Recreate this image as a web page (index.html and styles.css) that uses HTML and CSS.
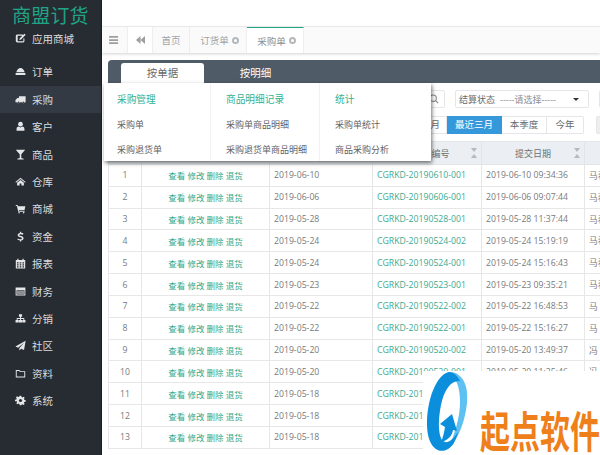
FILE: index.html
```html
<!DOCTYPE html>
<html lang="zh">
<head>
<meta charset="utf-8">
<title>采购单</title>
<link rel="stylesheet" href="styles.css">
</head>
<body>
<div class="app">
  <aside class="side">
    <div class="brand">商盟订货</div>
    <a class="item first"><svg class="ic" viewBox="0 0 14 14"><path d="M2.500 2h7.500v1.400H3.400v7.200h7.200V7h1.400v3.500a2 2 0 0 1-2 1.500H3a2 2 0 0 1-2-1.700V3.700A2 2 0 0 1 2.500 2zM12 .8l1.600 1.500-5.800 5.900L5.400 9l.7-2.400z"/></svg>应用商城</a>
    <a class="item gap"><svg class="ic" viewBox="0 0 14 14"><path d="M7 2.500c2.500 0 4.500 2 5.300 5.500H1.700C2.500 4.500 4.500 2.500 7 2.500zM.8 9h12.400v2.500H.8z"/></svg>订单</a>
    <a class="item active"><svg class="ic" viewBox="0 0 14 14"><path d="M5 3h8.500v7.500h-1.300a1.700 1.700 0 0 1-3.300 0H6.100a1.700 1.700 0 0 1-3.300 0H.6V7.500L3 5h2z"/><circle cx="4.500" cy="10.700" r="1" fill="#333a44"/><circle cx="10.500" cy="10.700" r="1" fill="#333a44"/></svg>采购</a>
    <a class="item"><svg class="ic" viewBox="0 0 14 14"><circle cx="7" cy="4" r="3"/><path d="M2 12.500V10c0-2 1.500-3 3-3l2 1.200L9 7c1.500 0 3 1 3 3v2.500z"/></svg>客户</a>
    <a class="item"><svg class="ic" viewBox="0 0 14 14"><path d="M1 1h12L8 6.800V11.300l3 1.200v.8H3v-.8l3-1.200V6.800z"/></svg>商品</a>
    <a class="item"><svg class="ic" viewBox="0 0 14 14"><path d="M7 2.200l6.500 5.500-.8.800L7 3.800 1.300 8.500l-.8-.8zM2.700 8.600L7 5l4.300 3.600v3.400H8.200V9.400H5.800V12H2.700z"/></svg>仓库</a>
    <a class="item"><svg class="ic" viewBox="0 0 14 14"><path d="M1 2.500h2.300l.4 1.500h9.500l-1 5H5l.2 1h7v1.200H4.200L2.400 3.700H1z"/><circle cx="5.200" cy="12.300" r="1"/><circle cx="11" cy="12.300" r="1"/></svg>商城</a>
    <a class="item"><svg class="ic" viewBox="0 0 14 14"><path d="M6.300 1h1.500v1.300c1.300.1 2.300.5 3 1l-.8 1.500c-.8-.5-1.700-.8-2.800-.8-1 0-1.700.4-1.700 1 0 .7.8 1 2.100 1.300 2 .5 3.300 1.200 3.300 3 0 1.600-1.200 2.600-3.100 2.800V13.500H6.300v-1.400c-1.400-.1-2.600-.6-3.400-1.200l.9-1.500c.9.700 2 1.100 3.100 1.100 1.100 0 1.900-.4 1.900-1.100 0-.7-.8-1-2.200-1.300-1.900-.5-3.200-1.200-3.200-2.900 0-1.500 1.200-2.500 2.900-2.700z"/></svg>资金</a>
    <a class="item"><svg class="ic" viewBox="0 0 14 14"><path d="M3 .8h1.500v1.700h5V.8H11v1.700h2v11H1v-11h2zM2.500 5.500v1.500h2V5.500zm3.500 0v1.500h2V5.500zm3.500 0v1.500h2V5.500zM2.500 8v1.500h2V8zM6 8v1.500h2V8zm3.500 0v1.500h2V8zM2.500 10.500V12h2v-1.500zm3.500 0V12h2v-1.500zm3.500 0V12h2v-1.500z"/></svg>报表</a>
    <a class="item"><svg class="ic" viewBox="0 0 14 14"><path d="M.8 2h12.400v10H.8zm1.200 3.500V10.800h10V5.500z"/><path class="dim" d="M2.500 6h9v4.300h-9z"/></svg>财务</a>
    <a class="item"><svg class="ic" viewBox="0 0 14 14"><path d="M5 1.500h4v3.300H7.600v1.600h4.200v2.500h1.500v3.300H9.300V8.900h1.400V7.500H7.600v1.400H9v3.300H5V8.900h1.400V7.500H3.300v1.400h1.400v3.300H.7V8.900h1.500V6.400h4.200V4.800H5z"/></svg>分销</a>
    <a class="item"><svg class="ic" viewBox="0 0 14 14"><path d="M13.500.8L11.500 12.700 7.800 11 5.500 13.500V10.500L11.500 3.500 4 9.800.5 8.300z"/></svg>社区</a>
    <a class="item"><svg class="ic" viewBox="0 0 14 14"><path d="M1 2.500h4.500L7 4h6v8H1zm1.200 1.200v7.100h9.600V5.200H6.500L5 3.700z"/></svg>资料</a>
    <a class="item"><svg class="ic" viewBox="0 0 14 14"><path d="M6 1h2l.3 1.700 1.100.5 1.500-1 1.400 1.400-1 1.500.5 1.100 1.700.3v2l-1.700.3-.5 1.100 1 1.500-1.400 1.400-1.500-1-1.100.5L8 13H6l-.3-1.700-1.100-.5-1.500 1-1.400-1.400 1-1.500-.5-1.100L0 8V6l1.700-.3.5-1.100-1-1.500 1.400-1.400 1.500 1 1.100-.5z"/><circle cx="7" cy="7" r="2" fill="#272c33"/></svg>系统</a>
  </aside>

  <main class="main">
    <header class="top"></header>
    <nav class="tabbar">
      <span class="cell toggle"><svg class="tool" viewBox="0 0 12 10"><path d="M0 0h10v2H0zM0 3.500h10v2H0zM0 7h10v2H0z"/></svg></span>
      <span class="cell back"><svg class="tool" viewBox="0 0 12 10"><path d="M6 0v9L1 4.500zM11 0v9L6 4.500z"/></svg></span>
      <span class="cell tab home">首页</span>
      <span class="cell tab order">订货单<i class="close"></i></span>
      <span class="cell tab current">采购单<i class="close"></i></span>
    </nav>

    <section class="panel">
      <div class="panelbar">
        <span class="ptab on">按单据</span>
        <span class="ptab">按明细</span>
      </div>
      <div class="filters">
        <div class="frow one">
          <span class="search"><svg class="mag" viewBox="0 0 12 12"><circle cx="5" cy="5" r="3.800"/><path d="M8 8l3 3"/></svg></span>
          <span class="select"><span>结算状态</span><span class="ph">-----请选择-----</span><i class="caret"></i></span>
          <span class="stub"></span>
        </div>
        <div class="frow two">
          <span class="btns"><b class="b month">本月</b><b class="b cur">最近三月</b><b class="b quarter">本季度</b><b class="b year">今年</b></span>
          <span class="stub light"></span>
        </div>
      </div>
      <div class="tablewrap">
        <table class="grid">
          <colgroup><col class="c1"><col class="c2"><col class="c3"><col class="c4"><col class="c5"><col class="c6"></colgroup>
          <thead><tr><th>#</th><th>操作</th><th>单据日期</th><th class="sort">采购单编号<i class="arrows"></i></th><th class="sort">提交日期<i class="arrows"></i></th><th>制单人</th></tr></thead>
          <tbody>
            <tr><td>1</td><td class="acts">查看 修改 删除 退货</td><td>2019-06-10</td><td class="no">CGRKD-20190610-001</td><td>2019-06-10 09:34:36</td><td class="who">马春</td></tr>
            <tr><td>2</td><td class="acts">查看 修改 删除 退货</td><td>2019-06-06</td><td class="no">CGRKD-20190606-001</td><td>2019-06-06 09:07:44</td><td class="who">马春</td></tr>
            <tr><td>3</td><td class="acts">查看 修改 删除 退货</td><td>2019-05-28</td><td class="no">CGRKD-20190528-001</td><td>2019-05-28 11:37:44</td><td class="who">马春</td></tr>
            <tr><td>4</td><td class="acts">查看 修改 删除 退货</td><td>2019-05-24</td><td class="no">CGRKD-20190524-002</td><td>2019-05-24 15:19:19</td><td class="who">马春</td></tr>
            <tr><td>5</td><td class="acts">查看 修改 删除 退货</td><td>2019-05-24</td><td class="no">CGRKD-20190524-001</td><td>2019-05-24 15:16:43</td><td class="who">马春</td></tr>
            <tr><td>6</td><td class="acts">查看 修改 删除 退货</td><td>2019-05-23</td><td class="no">CGRKD-20190523-001</td><td>2019-05-23 09:35:21</td><td class="who">马春</td></tr>
            <tr><td>7</td><td class="acts">查看 修改 删除 退货</td><td>2019-05-22</td><td class="no">CGRKD-20190522-002</td><td>2019-05-22 16:48:53</td><td class="who">马</td></tr>
            <tr><td>8</td><td class="acts">查看 修改 删除 退货</td><td>2019-05-22</td><td class="no">CGRKD-20190522-001</td><td>2019-05-22 15:16:27</td><td class="who">马</td></tr>
            <tr><td>9</td><td class="acts">查看 修改 删除 退货</td><td>2019-05-20</td><td class="no">CGRKD-20190520-002</td><td>2019-05-20 13:49:37</td><td class="who">冯</td></tr>
            <tr><td>10</td><td class="acts">查看 修改 删除 退货</td><td>2019-05-20</td><td class="no">CGRKD-20190520-001</td><td>2019-05-20 11:35:46</td><td class="who">冯</td></tr>
            <tr><td>11</td><td class="acts">查看 修改 删除 退货</td><td>2019-05-18</td><td class="no">CGRKD-20190518-003</td><td></td><td></td></tr>
            <tr><td>12</td><td class="acts">查看 修改 删除 退货</td><td>2019-05-18</td><td class="no">CGRKD-20190518-002</td><td></td><td></td></tr>
            <tr><td>13</td><td class="acts">查看 修改 删除 退货</td><td>2019-05-18</td><td class="no">CGRKD-20190518-001</td><td></td><td></td></tr>
          </tbody>
        </table>
      </div>

      <div class="menu">
        <ul class="mcol mc1"><li class="mh">采购管理</li><li>采购单</li><li>采购退货单</li></ul>
        <ul class="mcol mc2"><li class="mh">商品明细记录</li><li>采购单商品明细</li><li>采购退货单商品明细</li></ul>
        <ul class="mcol mc3"><li class="mh">统计</li><li>采购单统计</li><li>商品采购分析</li></ul>
      </div>
    </section>
  </main>

  <div class="mark">
    <svg class="swirl" viewBox="423 371 47 84">
      <path class="sw-light" d="M448 372C462 371 469 385 467 403C465 421 459 438 450 446C455 431 460 418 460 402C460 388 457 378 448 372Z"/>
      <path class="sw-dark" d="M449 372C436 375 427 400 427 424C427 444 436 454 446 450C452 448 456 441 458 432C452 441 447 444 443 441C438 436 438 420 441 405C444 390 451 380 460 381C457 375 453 372 449 372Z"/>
      <path class="sw-dark" d="M452 414L440 424L445 427C444 433 443 437 441 442C448 440 452 436 453 430L457 431Z"/>
    </svg>
    <span class="marktext">起点软件</span>
  </div>
</div>
</body>
</html>
```

FILE: styles.css
```css
* { box-sizing: border-box; }
html, body { margin: 0; padding: 0; }
body {
  font-family: "Open Sans", "Noto Sans CJK SC", sans-serif;
  font-size: 10px;
  color: #676a6c;
  background: #fff;
}
.app {
  position: relative;
  display: flex;
  width: 600px;
  height: 455px;
  overflow: hidden;
}

/* sidebar */
.side {
  flex: 0 0 102px;
  background: #272c33;
  border-right: 1px solid #1c1f24;
  color: #dfe2e5;
}
.brand {
  height: 25px;
  padding: 5px 0 0 12px;
  color: #1fa485;
  font-size: 19px;
  line-height: 22px;
  letter-spacing: 0.2px;
  white-space: nowrap;
}
.item {
  display: flex;
  align-items: center;
  height: 27.4px;
  padding-left: 15px;
  font-size: 10.500px;
  color: #d9dcdf;
}
.first { margin-top: 0.300px; }
.gap { margin-top: 5.600px; }
.active { background: #333a44; }
.ic {
  flex: none;
  width: 11px;
  height: 11px;
  margin-right: 6px;
  fill: #e4e6e8;
}
.dim { fill: #8d9197; }

/* main column */
.main {
  flex: 1;
  min-width: 0;
  display: flex;
  flex-direction: column;
  background: #fff;
}
.top { height: 27px; flex: none; background: #fff; border-bottom: 1px solid #f0f0f0; }
.tabbar {
  flex: none;
  display: flex;
  height: 26px;
  background: #fafafa;
  box-shadow: 0 1px 3px rgba(0, 0, 0, .18);
}
.cell {
  display: flex;
  align-items: center;
  justify-content: center;
  background: #fff;
  border-right: 1px solid #eeeeee;
  color: #a0a3a6;
  font-size: 9.500px;
  white-space: nowrap;
}
.toggle { width: 26px; background: #fafafa; }
.back { width: 25px; }
.home { width: 37px; background: #fafafa; }
.order { width: 57px; padding-left: 3px; background: #fafafa; }
.current { width: 57px; padding-left: 3px; border-top: 1px solid #1fa485; color: #8b8e91; }
.tool { width: 11px; height: 9px; fill: #9c9ea0; }
.close {
  display: block;
  width: 7px;
  height: 7px;
  margin-left: 3px;
  border-radius: 50%;
  background: #fff;
  border: 2px solid #b5b8ba;
}

/* panel */
.panel {
  position: relative;
  flex: 1;
  min-height: 0;
  margin: 7px 0 0 6px;
}
.panelbar {
  display: flex;
  align-items: flex-end;
  height: 23px;
  padding-left: 13px;
  background: #4f5b67;
  border-radius: 4px 0 0 0;
}
.ptab {
  width: 83px;
  height: 20px;
  margin-right: 10px;
  line-height: 20px;
  text-align: center;
  font-size: 10.500px;
  color: #fff;
}
.ptab.on { background: #fff; color: #676a6c; border-radius: 3px 3px 0 0; }
.filters { padding-top: 7px; }
.frow { display: flex; align-items: center; height: 18px; }
.frow.one { padding-left: 190px; }
.frow.two { margin-top: 8px; padding-left: 276px; }
.search {
  flex: none;
  display: flex;
  align-items: center;
  justify-content: flex-end;
  width: 147px;
  height: 18px;
  padding-right: 5px;
  border: 1px solid #e5e6e7;
  border-radius: 2px;
}
.mag { width: 10px; height: 10px; fill: none; stroke: #888; stroke-width: 1.300; }
.select {
  flex: none;
  display: flex;
  align-items: center;
  width: 134px;
  height: 18px;
  margin-left: 10px;
  padding: 0 3px;
  border: 1px solid #e5e6e7;
  border-radius: 2px;
  font-size: 9px;
  white-space: nowrap;
}
.ph { margin-left: 5px; color: #8b8e91; }
.caret {
  width: 0;
  height: 0;
  margin-left: auto;
  margin-right: 6px;
  border: 3px solid transparent;
  border-top-color: #333;
  border-bottom: 0;
}
.stub {
  flex: none;
  width: 20px;
  height: 18px;
  margin-left: 10px;
  border: 1px solid #e5e6e7;
  border-radius: 2px;
}
.stub.light { margin-left: 12px; background: #eeeeee; }
.btns { display: flex; flex: none; }
.b {
  display: block;
  height: 18px;
  line-height: 16px;
  text-align: center;
  border: 1px solid #e5e6e7;
  border-left: 0;
  font-size: 9.500px;
  font-weight: 400;
  white-space: nowrap;
}
.month { width: 63px; padding-left: 30px; border-left: 1px solid #e5e6e7; }
.cur { width: 55px; background: #3498db; border-color: #3498db; color: #fff; }
.quarter { width: 45px; }
.year { width: 37px; border-radius: 0 2px 2px 0; }

/* table */
.tablewrap { margin-top: 7px; overflow: hidden; }
.grid {
  table-layout: fixed;
  width: 560px;
  border-collapse: collapse;
  color: #777a7d;
}
.c1 { width: 33px; }
.c2 { width: 128px; }
.c3 { width: 103px; }
.c4 { width: 109px; }
.c5 { width: 103px; }
.c6 { width: 84px; }
.grid th {
  position: relative;
  height: 23px;
  padding: 0;
  background: #ebeff3;
  border: 1px solid #e3e6e9;
  font-weight: 400;
  color: #6c6f72;
  font-size: 9px;
}
.grid td {
  height: 21.83px;
  padding: 0 4px;
  border: 1px solid #e7e7e7;
  white-space: nowrap;
  text-align: left;
  font-size: 8.700px;
  overflow: hidden;
}
.grid td:first-child { text-align: center; }
.grid .acts { text-align: center; color: #2fa98c; font-size: 8.500px; }
.grid .no { color: #3aaa8f; }
.arrows {
  position: absolute;
  right: 4px;
  top: 6px;
  width: 0;
  height: 10px;
  border-left: 3px solid transparent;
  border-right: 3px solid transparent;
  border-top: 4px solid #b5bac0;
  border-bottom: 4px solid #b5bac0;
}

/* dropdown */
.menu {
  position: absolute;
  left: -4px;
  top: 23px;
  display: flex;
  width: 327px;
  height: 78px;
  background: #fff;
  box-shadow: 1px 2px 4px rgba(0, 0, 0, .55);
}
.mcol {
  margin: 0;
  padding: 7px 0 0 15px;
  list-style: none;
  border-right: 1px solid #f2f2f2;
  font-size: 9px;
  color: #5f6265;
  white-space: nowrap;
}
.mc1 { width: 107px; padding-left: 13px; }
.mc2 { width: 109px; }
.mc3 { flex: 1; border-right: 0; }
.mcol li { height: 25px; line-height: 20px; }
.mcol .mh { color: #2fb193; font-size: 9.700px; }

/* watermark */
.mark {
  position: absolute;
  left: 423px;
  top: 371px;
  width: 177px;
  height: 84px;
  display: flex;
  background: #fff;
}
.swirl { flex: none; width: 47px; height: 84px; }
.sw-light { fill: #5fc0f2; }
.sw-dark { fill: #0b8fdc; }
.marktext {
  margin: 36px 0 0 10px;
  height: 30px;
  font-family: "Noto Sans CJK SC", sans-serif;
  font-size: 30px;
  line-height: 30px;
  font-weight: 700;
  color: #ef7f1a;
  white-space: nowrap;
  transform: scaleY(1.45);
  transform-origin: top left;
}
```
